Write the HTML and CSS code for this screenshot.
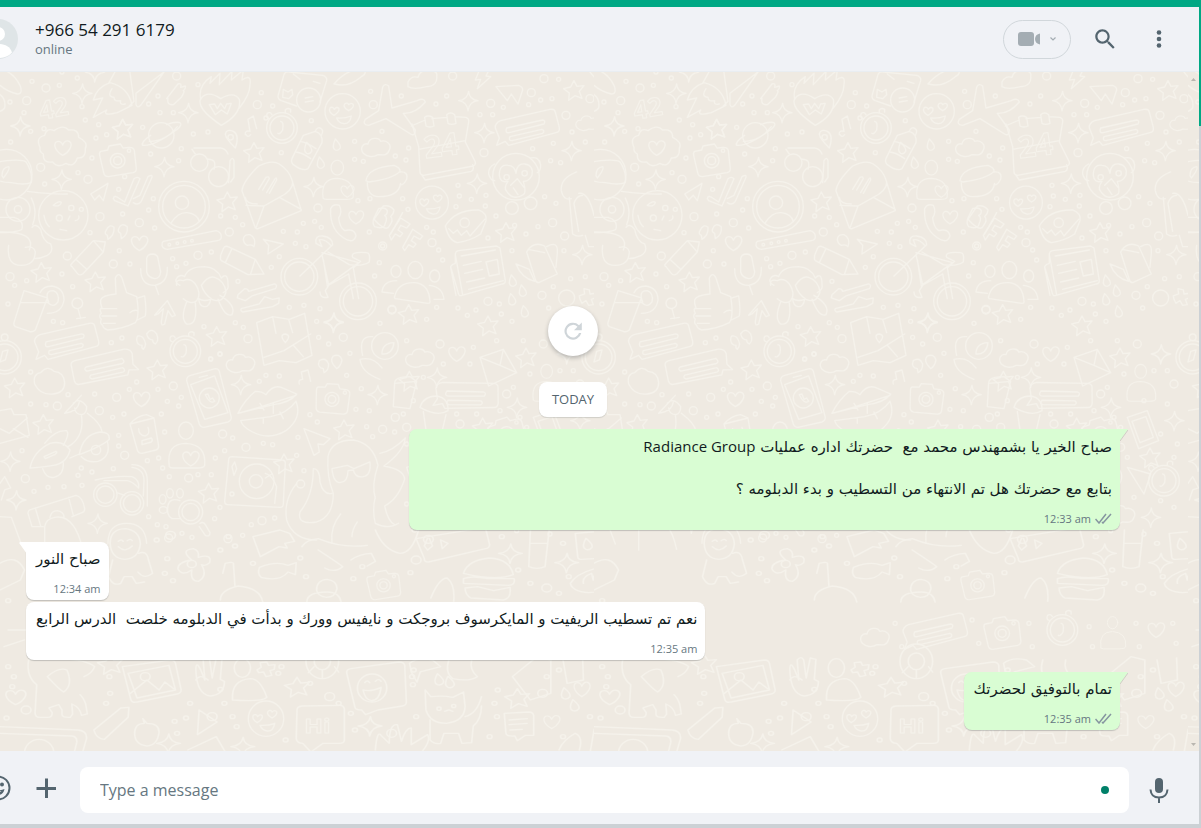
FILE: index.html
```html
<!DOCTYPE html>
<html lang="en">
<head>
  <meta charset="UTF-8">
  <meta name="viewport" content="width=device-width, initial-scale=1.0">
  <title>Chat</title>
  <link rel="stylesheet" href="styles.css">
</head>
<body>
  <div class="app">
    <header class="header">
      <svg class="avatar" viewBox="0 0 40 40" aria-hidden="true">
        <circle cx="20" cy="20" r="20" fill="#dfe5e7"/>
        <circle cx="20" cy="15" r="7" fill="#fff"/>
        <path d="M6 33.500C8 27 14 25 20 25s12 2 14 8.500C30 38 25 39 20 39S10 38 6 33.500z" fill="#fff"/>
      </svg>
      <div class="contact">
        <div class="contact-name">+966 54 291 6179</div>
        <div class="contact-status">online</div>
      </div>
      <div class="actions">
        <button class="video-btn" type="button" aria-label="Video call">
          <svg width="24" height="24" viewBox="0 0 24 24"><rect x="1" y="5" width="16" height="14" rx="3"/><path d="M18 12c0-3 2-5 5-5.500v11c-3-.500-5-2.500-5-5.500z"/></svg>
          <svg width="8" height="8" viewBox="0 0 8 8"><path d="M1.500 2.500L4 5l2.500-2.500" fill="none" stroke="currentColor" stroke-width="1.200"/></svg>
        </button>
        <button class="icon-btn" type="button" aria-label="Search">
          <svg width="26" height="26" viewBox="0 0 24 24"><path d="M15.900 14.300H15l-.3-.3c1-1.100 1.600-2.700 1.600-4.300 0-3.700-3-6.700-6.700-6.700S3 6 3 9.700s3 6.700 6.700 6.700c1.600 0 3.200-.6 4.300-1.600l.3.3v.8l5.100 5.100 1.500-1.500-5-5.200zm-6.200 0c-2.600 0-4.600-2.100-4.600-4.600s2.100-4.600 4.600-4.600 4.600 2.100 4.600 4.600-2 4.600-4.600 4.600z"/></svg>
        </button>
        <button class="icon-btn" type="button" aria-label="Menu">
          <svg width="24" height="24" viewBox="0 0 24 24"><circle cx="12" cy="5.500" r="2.300"/><circle cx="12" cy="12" r="2.300"/><circle cx="12" cy="18.500" r="2.300"/></svg>
        </button>
      </div>
    </header>

    <main class="chat">
      <svg class="wallpaper" aria-hidden="true">
        <defs>
          <marker id="dot" markerUnits="userSpaceOnUse" markerWidth="20" markerHeight="20" refX="10" refY="10"><circle class="line" cx="10" cy="10" r="6"/></marker>
          <marker id="ring" markerUnits="userSpaceOnUse" markerWidth="40" markerHeight="40" refX="20" refY="20"><circle class="line" cx="20" cy="20" r="12"/></marker>
          <marker id="spark" markerUnits="userSpaceOnUse" markerWidth="80" markerHeight="80" refX="40" refY="40"><path class="line" d="M42 12q2 25 28 28q-26 3-30 30q-2-26-28-30q26-3 30-28z"/></marker>
          <marker id="star" markerUnits="userSpaceOnUse" markerWidth="80" markerHeight="80" refX="40" refY="40"><path class="line" d="M38 12l9 17 21-2-14 17 8 21-21-8-19 14 2-22-17-13 21-5z"/></marker>
          <path id="heart" d="M0 22C-30 4-28-20-13-20Q-4-20 0-9Q7-26 20-20C34-10 18 14 0 22z"/>
          <path id="cloud" d="M-38 20c-12-16 0-32 14-28c4-22 34-20 38-8c20-6 34 12 26 26c-6 20-24 14-34 14c-16 10-34 6-44-4z"/>
          <path id="drop" d="M-4-17q18 18 15 27q-6 10-15 6q-12-6 0-33z"/>
          <g id="love"><circle r="53"/><path d="M-26 12q-18-10-12-22q8-6 13 4q8-10 14-2q2 10-15 20zM18-2q-18-10-12-20q8-6 12 2q9-8 14 0q2 10-14 18zM-18 20q24 2 44-6q-4 24-22 23q-16-2-22-17z"/></g>
          <g id="bubble"><path d="M-80-26L68-60q14-2 16 8l12 46q2 14-10 16L-56 48l-10-12-26 12 8-22-12-30q-2-14 16-22z"/><path d="M-62-4L46-28q10 2 4 12L-54 10q-14 2-8-14zM-52 22L44 0q10 4 2 12L-46 34q-12 0-6-12z"/></g>
          <g id="camera"><path d="M-50-28l20-4 4-12 34-6 8 12 20-2q12 0 14 10l6 54q0 10-10 12l-74 12q-12 0-14-12l-12-52q-2-10 4-12z"/><circle r="22"/><circle r="12"/><circle cx="34" cy="-30" r="5"/></g>
          <g id="clock"><circle r="46"/><circle r="36"/><path d="M-4-20q10 0 6 26q-8 14-14 10M10-46v-8q6-8 16-2v8M-38-28q-12-4-6-16q8-6 14 4"/></g>
          <g id="compass"><circle r="50"/><circle r="40"/><path d="M-14 14l8-32 16-4-8 30z"/><circle cy="-60" r="10"/></g>
          <g id="person"><ellipse cy="-60" rx="22" ry="26"/><path d="M-50 48q-10-70 50-70q62 4 56 66q-2 8-24 8h-70q-10 0-12-4z"/></g>
          <pattern id="doodles" patternUnits="userSpaceOnUse" width="594" height="686">
            <g class="line">
              <!-- top left -->
              <g transform="scale(.3333)">
                <path d="M0-10q40 10 60 50q10 26-8 26Q20 58 0 40M-20 60q40 8 34 48q-10 14-34 10"/>
                <text class="doodle-text" x="118" y="136" transform="rotate(-10 160 110)">42</text>
                <path d="M330 32q-40 14-50 52l28-6-28 58 40-22q-14 20 32 8l44-22q-10-54-66-68zM326 34l22-40 40-6 14 100-14 14M336 50q-16 24 6 26 0 14 20 10-4 14 14 10"/>
                <path d="M408 64l84-64-70 100q-10 10-14-2zM500 80l34-44q12-4 8 10l14-4q2 8-6 14 6 0-6 20l-24 22q-20 2-16-18z"/>
                <path d="M664 160q-80-54-60-82q20-24 58 2q40-24 56 2q8 44-54 78zM602 80q-8-40 32-66l-4 20 30-30-2 34 38-40-2 26 36-30-4 30q30-20 24 14 0 30-32 70M628 98l16-2 8 14 10-16 12 16 6-14 14-2-12 32-18-12-18 14z"/>
                <path d="M852 8l-18 64q0 10 10 14l46 16M852 8q4-10 16-8l100 10q14 4 12 16l-20 64M850 52l14 8 12-8 2 16-12 12-18-4zM880 6l20 16M940 28l20 6"/><circle cx="926" cy="84" r="36"/><path d="M916 78l22-4M916 90l24-4M1002 36q40-46 84-44q20 10-2 22q-40 34-80 22z"/>
                <use href="#love" x="1028" y="118"/>
                <path d="M1148 46q6-14 18-4l10 66 76-22q20-10 24 4-30 36-66 34l36 50q0 20-14 12l-74-46-52 20q-20-2-10-18l40-26z"/>
                <path d="M120 226q-14-30 14-36q6-24 28-14q28-20 44-2q30-4 30 22q30 14 20 34q2 30-24 28q-10 30-34 16q-26 16-40-4q-30 4-28-24q-12-6-10-20z"/><use href="#heart" x="188" y="228"/>
                <use href="#camera" x="353" y="266"/>
                <circle cx="484" cy="190" r="38"/><path d="M452 190q-30 20-24 30q34 4 104-48q16-14 8-20q-14-4-40 6M448 208q50 0 84-44"/>
                <circle cx="598" cy="272" r="26"/><circle cx="656" cy="314" r="30"/><path d="M622 262q30-2 20 30M576 232l10 14M582 228h80q16 2 22 18M686 332l4-66q8-14 12 0v50l-10 14"/>
                <path d="M706 228q-30-30-30-42q4-16 24-8q20 10 6 50z"/><circle cx="692" cy="196" r="8"/>
                <path d="M736 188q-2-14 14-10l-6-36 16-10 10 38M752 188q-8 10-14 0"/>
                <use href="#clock" x="846" y="168"/>
                <path d="M876 260l34-70 36-12q24 8 20 34l-42 78q-14 10-44-12 -8-8-4-18zM900 208q20 2 48 22M888 240q20 2 44 20M946 178q6-16 18-8q8 6 0 20"/><use href="#drop" x="924" y="228"/>
                <use href="#drop" x="1010" y="218"/><use href="#drop" x="962" y="272"/><use href="#cloud" x="1128" y="224"/>
                <circle cx="20" cy="308" r="76"/><path d="M-40 300q10-30 60-34q50-4 58 4q20 30 16 62q-20 8-60 0q-50 0-74-32zM6 312q0-26 20-28q6 6-16 34z"/>
                <circle cx="54" cy="412" r="36"/><circle cx="54" cy="412" r="11"/><path d="M82 358q80 10 120 8M96 466q10-14 26 6 6 36 30 44 10 22-10 34-20 10-40 10M94 378q20 40 4 80M-20 436h62q30 8 24 34-4 10-66 12M0 480q110-2 88 54M26 520q-8 60 38 60 40 0 42-40-4-20-30-14"/>
                <circle cx="190" cy="430" r="74"/><path d="M160 400q20-16 24-8-4 14-24 8zM204 444l6-12M226 446q14-4 10-14M132 430q4 24 16 34M180 472l20 4"/><circle cx="178" cy="438" r="9"/><circle cx="214" cy="408" r="8"/><circle cx="244" cy="412" r="6"/>
                <path d="M272 366l52-32-14 52-12-16-14 14z M340 380q2-12 16-2l18 12 28-70q10-8 18 0l-36 82-40-16zM400 380l20-10 24-56q14-8 12 2l-32 72q-10 14-24 4"/>
                <circle cx="552" cy="404" r="76"/><circle cx="552" cy="404" r="64"/><circle cx="546" cy="392" r="20"/><path d="M514 452q20-32 48-30q30 4 36 26"/>
                <path d="M726 356q4-30 50-74 40-20 62-6 30 20 38 48l28 92-130 54q-8 2-10-8zM738 400l54 2 46-26 66 36M792 402l-24 66M736 376q2 20 36 20M838 376q40-20 40-44M776 352l22-36q8-4 10 4l-20 34M800 362l24-40q6-10 6 2l-22 40"/>
                <use href="#person" transform="translate(1012 338) scale(.85)"/><use href="#heart" transform="translate(1042 358) scale(.8)"/>
                <path d="M1098 326q6-40 84-46q20 8 18 18-20 22-94 32zM1102 332q0 40 34 42 60 0 66-40M1200 300q26-2 20 22-10 20-20 16"/>
                <path d="M992 410q8-16 26-10q10 20-2 38 4 30 18 38 30-8 34 16-6 20-26 12-54-26-50-94z"/><use href="#heart" transform="translate(1068 436) scale(.9)"/>
                <path d="M318 476q10-22 24-10q2 24-18 36l-2-12q-10-4-4-14zM356 470q8-20 26-6q2 26-18 36l-2-16q-10-4-6-14z"/><use href="#heart" x="418" y="514"/>
                <path d="M214 576l66-70 36 4-6 30-62 66q-10 6-16-2l-16-20q-6-4-2-8zM280 506l30 34M230 564l30 28"/>
                <path d="M490 508l158-32q16 4 16 18 0 10-12 12l-150 26q-14-2-16-12 0-10 4-12z"/><circle cx="508" cy="518" r="4"/><circle cx="532" cy="514" r="4"/><circle cx="554" cy="510" r="4"/><circle cx="576" cy="506" r="4"/>
                <path d="M662 550l8-20q4-10 14-6l82 38 26 44-48 2-80-42q-4-4-2-16zM766 562l-14 44M696 530l-20 42M730 504q0-18 20-16 20 10 12 36-6-8-20-4-10-4-12-16z M790 502l60 14-46 30 2-26z"/>
                <path d="M440 600v-40q2-14 18-14 16 2 16 14l8 40q-2 20-18 20-20-4-24-20zM422 590q0 50 42 50 40-6 38-54M466 640l10 28"/>
                <path d="M302 684q4-14 46-18l-2-48q10-20 20 0l14 44 30 12q10 60-4 78-40 20-84 22-14-6-14-14-10-6-4-18-10-10 0-18-8-14 2-16-6-14-4-24M306 710h44M306 732h44M310 754h36M414 678l20-6q6 40 2 60l-24 12M414 716q-14-4-24 6"/>
                <path d="M540 640q-20-10-8-24 10-10 22-2 10-30 60-30 36 2 50 34 20-20 20 20 4 14-14 24M530 640q-4-20 20-14 20-10 36 10 20 30 4 50-16 14-40-6M604 640q20-30 40-24 30 10 34 44-10 36-42 22-24-16-32-42M596 680q14 10 36 2-4 24-20 22-14-2-16-24zM560 690q-20 50 0 66 34 6 26-64M660 670q50 30 36 58-20 10-42-46"/>
                <path d="M464 730l38-44 24 44-10 4-12-18-10 40q-10 8-10-6l6-40-16 16zM714 668l20-18q10 0 12 8l78-22q10 4 2 14l-70 22-20 14-24-8zM724 710l54-14 16-22 24 8 20-4-2 16-18 10-90 16q-8-4-4-10z"/>
                <circle cx="898" cy="614" r="55"/><circle cx="898" cy="614" r="44"/><circle cx="1074" cy="688" r="55"/><circle cx="1074" cy="688" r="44"/>
                <path d="M900 612l94-90q-20-24-36-18l8 20-18-10q-4-24 20-22 30 4 30 26l-32 30 20 90 90-66-110-30M984 540l64 38q40 6 60-8 4-28-8-28-50-4-42 14l24 12-22 20 16 92M1060 680l-14-74-64 36-12-80M960 660q0 20 24 16l-8-20 12-18"/>
                <path d="M72 656l70 22-36 96q-10 8-18 4l-42-14q-6-4-4-12zM62 692h80M146 690q-14-34 14-34 20 8 14 34-14 20-32 0M120 662q10-20 36-20 36 6 36 42-6 40-50 40"/><circle cx="232" cy="694" r="16"/><path d="M234 710l8 30M230 740l26-4"/>
                <use href="#bubble" x="200" y="814"/>
                <use href="#compass" x="14" y="856"/><use href="#compass" x="1796" y="856"/>
                <path d="M410 804q0-20 18-8 16 20 2 36-6-4-4-12-14 0-16-16zM440 786q14-22 30 0 8 20-4 30-8-4-8-12-14 0-18-18z"/>
                <use href="#clock" x="556" y="838"/><use href="#cloud" x="722" y="872"/>
                <path d="M770 752l48-18 50 8 46-18 22 126-48 22-50-6-46 14zM818 734l10 50M866 742l12 40M792 856l60-20 80-50M880 820l30 34M856 812q-20-24 0-26 20 4 0 26z"/>
                <circle cx="1155" cy="822" r="40"/><path d="M1146 846q0-32 36-34-4 36-36 34M1088 850q-14-60 30-56M1080 862q40-10 66 26M1080 862q4 40 60 60"/>
                <path d="M1122 438l14-28q20-6 26 6 0 12-8 14 10 6 2 24-4 20-32 10-8-10-2-26zM1172 486l36-64"/>
                <path class="stars" d="M370 170M764 240L684 388L126 600L288 628L652 792L370 170"/>
                <path class="sparks" d="M246 64L60 162L184 322L492 284L564 122L940 344L1000 750L284 0"/>
                <path class="rings" d="M80 86L122 286L264 322L772 98L300 434L418 452L688 480L202 552L340 576L954 408L744 800L1120 98L30 614L594 550L1176 714L1030 796L138 48L530 12"/>
                <path class="dots" d="M96 28L178 40L232 18L72 122L30 90L92 178L132 170L32 210L246 104L256 144L296 158L320 188L288 198L276 258L234 302L134 336L474 72L446 96L480 122L428 166L520 122L580 186L624 180L544 230L452 246L536 266L594 38L784 62L818 102L844 242L934 146L798 138L662 432L706 436L728 458L368 426L446 414L460 380L464 468L358 536L390 576L518 560L530 584L558 574L634 540L838 554L886 514L918 524L892 480L910 454L944 448L964 466L850 478L1074 386L1110 380L1064 208L1064 262L1090 268L1146 178L1112 58L1138 572L1124 612L1108 480L1148 522L80 626L44 640L186 606L218 644L24 696L160 748L188 752L366 798L334 812L612 764L706 752L730 766L632 860L660 846L714 628L868 706L912 700L960 710L950 748L986 816L956 796L1050 844L814 586L374 314L356 352L270 482L186 0"/>
              </g>
              <!-- top right -->
              <g transform="translate(300) scale(.3333)">
                <path d="M324 30q10-20 30-14 6-24 30-18 30-4 26 14 4 30-30 32-40 10-56 0zM536 0l-10 24 16-2-10 28 40-36-14-2 8-16M588 44l68-4q12 4 12 14l-14 42-20-30-12 20z"/>
                <path d="M334 162l42-18M396 140l44-4M466 134l32 2q10 4 8 14l-10 60 30 60q2 8-6 12l-150 28q-10-2-10-10l-4-76-20-68M356 232l140-26M366 310l10 14 138-26q10-6 4-20M374 136q10-8 24 0l4 26q-12 6-24 0zM440 128q12-10 24 0l4 26q-14 6-24 0z"/>
                <text class="doodle-text big" x="372" y="252" transform="rotate(-8 430 226)">24</text>
                <use href="#bubble" x="682" y="172"/><use href="#love" transform="translate(396 392) scale(.93)"/>
                <use href="#cloud" transform="translate(862 152) scale(.8)"/>
                <circle cx="648" cy="314" r="70"/><path d="M584 276q-20 10-18 30 6 20 18 20M692 258q24-6 30 20 0 20-10 24M598 310q0-34 26-30 20 0 24 24 2-30 26-28 28 4 22 34-10 20-26 18 10 34 0 40-30 20-50-10-10-10 4-30-24 6-26-18zM632 340l20-20 20 26M640 348l14 20"/><circle cx="620" cy="316" r="8"/><circle cx="674" cy="304" r="8"/><circle cx="636" cy="408" r="19"/><circle cx="692" cy="394" r="19"/>
                <path d="M830 300q-50 20-46 56 6 30 30 24M808 376l10 110q14 10 30 4M836 364q30-4 46 66h60M856 490l10 34h50"/>
                <path d="M836 478l-14-84q8-24 26-24"/>
                <path d="M222 442l28-40q20-4 32 12 0 10-10 20 10 10-4 28-10 20-46-20zM268 490l34-52 28 18-10 12-18-8-8 14 14 10-8 10-14-8-12 18zM308 526l30-54 30 20-8 10-18-10-8 14 14 10-8 10-14-8-12 18z"/>
                <path d="M436 462q30-50 100-48 26 10 22 32l-16 40q-30 20-70 26-26-6-36-50zM446 470l14 14 12-10 12 16 16-14 10 16 44-50"/><circle cx="494" cy="452" r="14"/>
                <path d="M466 548q0-10 10-12l114-14 10 6 16 98q0 8-8 10l-122 34q-10 4-12-10l-22-76q4-8 14-10zM466 548l22 120M484 552l102-18M490 580l54-12M494 604l54-12M500 630l54-12M506 652l104-26M558 570l34-8 6 44-30 6zM452 586l16 84"/>
                <path d="M680 540q20-34 54-18l38 84-56 26q-8 0-10-10zM740 524q36-20 32 20l-4 42M684 532l50 10M648 576l40 16 16 36q-40-10-56-52z"/>
                <ellipse cx="346" cy="594" rx="22" ry="26"/><path d="M284 674q10-44 60-42 44 4 46 58 0 4-6 4l-98-14q-4-2-2-6z"/><ellipse cx="288" cy="598" rx="15" ry="18"/><path d="M246 660q4-34 44-34M246 660l34 4"/><ellipse cx="404" cy="612" rx="15" ry="18"/><path d="M388 640q40 4 44 42l-30 0"/>
                <use href="#drop" x="638" y="626"/><use href="#drop" x="668" y="656"/><use href="#drop" x="636" y="682"/><use href="#drop" x="674" y="718"/>
                <circle cx="800" cy="678" r="24"/><path d="M838 672l16-6-2-16 16 4 2 12 18-2-2 14-12 4 6 16-14 2-8-14-12 8-6-12z"/>
                <path d="M870 0q50 60 70 66 16-24-30-50"/>
                <path class="stars" d="M824 54L620 480L328 726L566 760L1030 0"/>
                <path class="sparks" d="M504 86L552 182L814 236L530 334L846 548L100 752"/>
                <path class="rings" d="M572 94L694 62L732 20L870 80L798 130L552 242L458 12L912 210L758 452L794 492L726 670L564 688L396 512L248 522L912 614L276 712"/>
                <path class="dots" d="M304 72L440 72L408 96L540 128L578 128L610 106L686 98L722 84L756 80L776 22L980 28L1020 48L962 86L912 92L816 180L856 210L752 266L782 272L698 230L760 214L474 340L478 372L514 382L558 370L556 402L588 432L468 404L564 498L644 460L678 486L714 464L734 374L768 394L636 536L792 536L812 620L856 614L760 644L928 640L380 466L400 480L416 534L428 564L326 228L286 252L318 264L308 380L324 412L636 748L502 730L474 708L528 714L598 696L604 726L380 742L410 706L240 754L908 696L746 708"/>
              </g>
              <!-- middle left -->
              <g transform="translate(0 278) scale(.3333)">
                <use href="#bubble" transform="translate(312 56) scale(-1 1) rotate(26)"/>
                <path d="M104 102q-6-30 18-34 20-24 40-4 30 2 32 34 0 30-34 34-40 4-56-30zM0 182l34-6 8 18 36 0 10 62-88 24M0 236l28 14 54-46M40 236l44 26"/>
                <path d="M194 190l50-54M194 190q40-6 44-34M220 160q20-20 40 10 0 20-14 24-20 0-22-20M244 194q10 60-30 90l-10 6M262 190q40 30 44 54M90 354q10-50 60-74 40-10 60 20-10 40-50 46-40 6-70 8zM134 280q30-40 66-38 10 10-10 44M238 314q10-60 62-68 30 0 28 22-20 20-90 46zM210 324l28-12M128 356q10 30 34 26 30-6 28-44M132 320l36-16q6 4-4 10l-28 12zM244 320q20 20 50 14 40-14 28-60"/><circle cx="288" cy="300" r="14"/>
                <path d="M560 92q0-14 12-16l74-20q10 0 12 8l36 138q0 10-10 14l-72 16q-10 0-14-10zM572 104l72-26 40 110-70 20zM598 82l24-6"/><circle cx="628" cy="144" r="30"/><path d="M616 134q14 30 28 20l-6-10-8 4-6-16z"/>
                <path d="M714 190q20-40 52-66 20 0 32 10 20-30 46-22l46 20q-20 26-70 32zM714 190l70-20q60-20 104-34M722 212l90-12q50-10 76-46 20 50-30 88-50 30-100 4-30-14-36-34zM780 160l12 20M820 160v30M840 186l10 20M790 206v14"/>
                <use href="#camera" transform="translate(996 148) rotate(14) scale(.96)"/>
                <path d="M898 102q-4-14 10-14l-4-22 20-6 8 34M970 56q-20-4-12-24 20-12 28 10 0 20-14 26zM1000 44q-10-14 0-26 20-8 26 12-4 20-16 26z"/>
                <path d="M912 236l78 30-20 18-16-2 4 24-16 10zM390 222q20-24 50-28l22 10 14 84q0 10-8 12l-42 10q-12 0-14-10zM390 222l72-18M416 236q0 20 20 22 16-6 8-26M426 272l28-8q6 6 0 12l-28 8z"/><use href="#heart" x="424" y="148"/>
                <use href="#person" transform="translate(558 302)"/><use href="#heart" x="572" y="326"/>
                <path d="M686 330q0-10 10-10l150 10q10 0 10 10l-6 122q0 10-10 10l-158-8q-8 0-8-10z"/><circle cx="770" cy="394" r="52"/><circle cx="768" cy="394" r="20"/><path d="M796 370q20 4 34 40l-6 50M696 350l8-14 6 20-8 20zM796 384l20-12"/>
                <path d="M1000 430q-20-50-16-110 10-50 76-50 60 10 74 76-20 60-8 100M996 356l46-10 20 10 48-20q4 40-20 44-24 4-30-20l-16 2q0 34-24 36-20 0-24-42zM1140 310q40-8 76-46-4 40-64 84 60 10 62 40-20 60-60 80 10 46 30 56M1126 440q-10 40 0 80 40 20 70 0M1000 430q0 70-50 86-60 10-50-30 40-50 40-130 20 0 20 40 10 40 36 34M890 400q-40 50-30 110 20 60 90 60M996 580q-6-50 26-88M1056 560q0-20 16-44"/>
                <circle cx="316" cy="434" r="35"/><circle cx="316" cy="434" r="26"/><circle cx="396" cy="460" r="35"/><circle cx="396" cy="460" r="26"/><path d="M286 390q60-14 110-10 24 10 20 34-20-20-34-22h-70M350 428l24 8M396 344q46 0 46 50l0 74M396 352q36 4 36 40l-2 46"/>
                <circle cx="572" cy="486" r="36"/><circle cx="572" cy="486" r="26"/><path d="M600 520q10-6 16 4l14 24q0 14-14 8l-18-26M540 452q-30-10-36 14-6 30 12 40h24"/><ellipse cx="488" cy="448" rx="10" ry="14"/><ellipse cx="510" cy="430" rx="10" ry="14"/><ellipse cx="540" cy="430" rx="10" ry="14"/><ellipse cx="490" cy="480" rx="12" ry="10"/>
                <path d="M84 490q0-10 10-12l134-42q20 4 26 40 0 10-8 12l-30 12M84 490l12 40h34M134 600v-70q4-24 30-28 60-10 84 96M150 502q4-20 22-20 20 4 20 20M206 442l14 54M106 474l16 54M0 500l34 2 30 80M0 400l14-20 18 34-18 6-10 30"/>
                <path d="M324 580q0-60 56-60t60 60"/>
                <path d="M1184 100q0-20 46-20l20 14M1184 100l-4 70 50 6 20-82z"/>
                <path class="stars" d="M46 112L474 58L132 222L628 428L854 340L1034 238"/>
                <path class="sparks" d="M30 334L48 450L292 520L722 104L1132 134"/>
                <path class="rings" d="M350 142L172 168L298 182L374 316L76 386L738 292L520 108L668 252L902 402L1148 238L566 384L786 512L506 564L1186 202L684 566"/>
                <path class="dots" d="M92 66L92 162L138 164L204 134L284 132L338 202L372 192L356 256L356 288L244 354L276 366L340 356L234 376L246 406L192 410L144 412L102 424L410 96L388 118L474 118L502 154L536 168L544 142L484 192L494 246L476 324L488 354L442 332L508 380L594 374L634 374L646 324L674 302L698 264L632 28L660 12L778 94L798 76L838 78L930 194L952 216L894 262L790 280L818 284L890 316L912 362L1100 230L1118 260L1184 246L1068 178L1084 116L1108 182L1040 76L446 500L472 524L498 530L546 550L576 562L644 506L660 472L728 556L754 524L824 504L66 302L696 432"/>
              </g>
              <!-- middle right -->
              <g transform="translate(400 262) scale(.3333)">
                <use href="#cloud" x="60" y="70"/><use href="#bubble" transform="translate(200 190) rotate(14)"/><use href="#heart" x="170" y="60"/>
                <path d="M240 70l70-24 40 70-84 40zM240 70l60 24 10-48M300 94l50 22"/><use href="#person" transform="translate(440 160) scale(.8)"/>
                <path d="M60 220q10-34 50-34 36 6 34 44-30 20-84-10zM70 232l10 70 44 0 14-60M400 250l60-20 34 90-60 24zM414 262l42-14 22 62-40 16z"/>
                <use href="#camera" transform="translate(320 300) rotate(-8)"/><use href="#love" transform="translate(180 350) scale(.9)"/><use href="#clock" x="510" y="440"/>
                <path d="M20 400l90-30 30 90-90 34zM40 416l60-20M46 440l60-20M270 430q30-60 90-40 40 30 10 70-40 40-90 20zM290 440q20-30 50-24M400 400l50 80 20-60z"/>
                <use href="#bubble" transform="translate(220 520) rotate(-4)"/><use href="#cloud" x="380" y="540"/><use href="#heart" x="60" y="540"/>
                <path class="stars" d="M30 140L380 70L250 280L470 370L60 340"/>
                <path class="sparks" d="M110 130L350 220L500 60L540 260L220 440L470 550"/>
                <path class="rings" d="M120 30L320 180L540 150L20 280L380 340L180 270L430 30L150 490L330 380"/>
                <path class="dots" d="M20 20L70 130L130 90L210 90L220 40L290 20L370 20L340 160L390 120L480 110L520 110L300 230L230 240L170 240L40 200L10 240L380 280L360 250L450 200L520 210L550 330L500 300L540 370L240 340L110 330L20 330L140 410L240 390L260 380L400 370L420 490L500 500L370 490L150 450L20 510L90 510L120 560L310 560L350 590L540 520L450 600"/>
              </g>
              <!-- bottom -->
              <g transform="translate(0 458) scale(.408 .3333)">
                <path d="M270 40q0-42 36-44 36 4 38 46-4 44-38 46-34-2-36-48zM276 90l-10 50q10 30 30 20l8-20h20l10 20 20-4M340 70q20-10 24 20l10 40q-20 20-36-4M290 34q8-8 12 0M312 32q8-8 12 0M290 50q16 20 34-2"/>
                <path d="M620 20l66-20 24 10 12 24-24 6 6 14-20-4-46 30zM470 90q-30-30 4-34 16 6 12 26 34-12 28 16-10 12-20 6 16 34-8 50-20 0-16-34-24 20-34-4 0-20 34-26z"/><circle cx="470" cy="102" r="11"/>
                <path d="M1020 26l150-30q10-6 20-2l10 50q0 10-10 12l-140 40q-10 0-10-10zM1040 48l10-30 10 30-12 12zM1080 30l18 10-14 16z M920 0q20 60 60 70 30 0 46-70M740 50q10-20 40-24 60 30 120 20M780 60q50 40 60 50-20 20-44 4M860 90q24-20 50-20l10 24-20 14"/>
                <path d="M636 112q40-20 70-6l20-8-2 36-18-8q-20 30-66 16-10-10-4-30zM546 130l6-30q20-6 20 0l4 70M540 210q0-30 44-42 54 6 60 48M776 180q0-30 26-32 24 4 24 28-4 26-26 26-22-4-24-22M752 216q0-30 50-30 30 0 34 30"/>
                <use href="#camera" transform="translate(940 166) scale(.75 .9)"/>
                <path d="M1136 130q10-40 64-46 50 4 58 50-40 20-122-4zM1136 146q20-10 60 0l64 0q4 20-14 20l-110-6zM1140 174l30-4 40 12 40-10q4 34-16 38l-80-6q-14-10-14-30zM1056 204q20-60 40-60 20 20 16 70M1300 0l-4 110q20 10 40 0l10-110M1300 40h40M1412 10l90-10M1410 10l6 70q0 8 10 8l80-6 10-80M1398 160q20-40 100-54 40 4 44 26-30 50-100 56-40-4-44-28zM1430 160q-4-20 20-30l4 20q0-20 20-30l4 20q10-20 20-26"/>
                <use href="#drop" x="1440" y="42"/>
                <path d="M70 390q-6 50 20 74l-4 84q0 14 12 14h20q10 0 10-14l-8-14 24-10 8 16 0 14q2 10 20 8l6-10-2-30q20 10 24 34l14-4-4-30q-6-20-14-28M116 440q30 40 40 46 24-20 8-66-20-10-48 20zM206 440q20-10 26-30-20-20-80-24M70 390q30-30 90-16"/>
                <path d="M300 410l118-20q10 0 12 10l14 80q0 10-10 12l-98 24q-14 4-16-10zM314 430l100-24 16 74-94 24zM320 490l40-40 30 30 14-24 22 20"/><circle cx="356" cy="440" r="12"/>
                <path d="M480 420q0-30 12 0l10 30-4-60q10-14 16 0l6 54 10-60 14 4-4 60 10 6q0 40-34 44-34-4-36-78zM480 450q10-20 30 0"/>
                <ellipse cx="594" cy="414" rx="20" ry="28"/><path d="M570 510q-4-60 44-64 24 0 40 56-10 14-84 8zM630 420l10-8-2-14 16-2 4 10 16-2-2 14-10 4 4 14-14 4-6-14-12 2z"/>
                <ellipse cx="790" cy="394" rx="40" ry="52"/><ellipse cx="790" cy="394" rx="20" ry="25"/><path d="M790 420v24M770 410l-14 18M820 410l10 16"/>
                <path d="M850 430q-2-12 10-14l118-20q12 0 14 10l4 110q0 10-10 12l-60 12-30 14-10-14q-14 0-16-8z"/><ellipse cx="912" cy="474" rx="36" ry="42"/><path d="M890 480q20 6 44-8-4 40-24 40-16-4-20-32zM894 458q6-10 12 0M920 454q8-10 14 0"/>
                <path d="M1004 400q20-20 56-10l20 20-50 16-8 30-14-30zM1100 390q-10 40 10 56 40 10 60-6-20-20-14-50M1256 440l60-60 34 10v100l-50 20zM1380 390l10 70 40-10-2-66"/>
                <path d="M1056 500l-14-20 2 60q10 40 50 40 44-6 46-50l-4-44-26 16q-24-6-54-2zM1054 570v60q10 14 26 10l8-30h36l8 30 24-2 4-50q20-20 20-60M1140 560q30-10 40-60M1090 544l10-4 10 4"/><circle cx="1076" cy="536" r="5"/><circle cx="1112" cy="528" r="5"/>
                <use href="#love" transform="translate(652 566) scale(.82 1)"/>
                <path d="M728 540q0-10 12-12l94-2q8 0 10 10v94q0 10-12 10h-40l-30 26-20-26q-14 0-16-14z"/><text class="doodle-text hi" x="746" y="608">Hi</text>
                <path d="M230 600l66-66 20-2-2 30-58 66q-20 0-26-28zM330 610q0-30 24-30l-4-14 10 14q30 0 30 26-4 40-30 42-30-4-30-38zM488 540l44 36-48 38zM920 660q4-60 14-44l20 24q0-60 20-56l10 50q10-40 24-40l0 50 40-30q10 20-20 60M460 660l70-40 24 50"/>
                <path d="M1236 550l60-4q10 0 12 10l0 60-20 0-20 16-6-14q-20 2-22-8zM1248 570l44-4M1248 584l44-4M1250 600l30-2M0 590l190 10q24 2 22 26l-14 60M0 610l176 8q14 2 12 20l-8 40M1370 660q10-30 40-50 20 10 10 50M1446 670l10-70q4-14 20-14l90 10"/><ellipse cx="96" cy="670" rx="36" ry="42"/>
                <use href="#heart" x="38" y="502"/><use href="#heart" transform="translate(1426 478) scale(.8 1)"/><use href="#heart" transform="translate(1352 576) scale(.8 .9)"/>
                <use href="#drop" x="1076" y="448"/><use href="#drop" x="1102" y="456"/><use href="#drop" x="1386" y="490"/><use href="#drop" x="1408" y="526"/>
                <path d="M0 100q40-30 60 20l-10 30-50 30M20 300l44 0M10 350l50-20"/>
                <g transform="translate(0 260) scale(.82 1)">
                  <use href="#cloud" x="840" y="60"/><use href="#bubble" x="1020" y="50"/><use href="#camera" x="1220" y="50"/><use href="#clock" x="1400" y="40"/><use href="#person" transform="translate(1550 60) scale(.7)"/><use href="#heart" x="1680" y="40"/>
                  <path class="dots" d="M900 20L920 90L1130 10L1150 80L1300 20L1310 90L1480 30L1490 90L1620 20L1630 90L1730 20L1740 80"/>
                </g>
                <path class="stars" d="M272 402L730 470L1270 504"/>
                <path class="sparks" d="M1250 70L1388 98L906 588L412 640L594 650"/>
                <path class="rings" d="M1050 28L1020 90L64 540L808 500L520 560L1330 490L418 16L1340 174L960 610"/>
                <path class="dots" d="M384 30L410 86L404 130L424 152L560 20L576 48L540 60L620 100L736 84L750 140L866 146L888 110L1006 128L1016 0L1230 20L1270 120L1380 40L1370 190L1394 140L1300 160L20 410L34 440L30 470L16 564L20 212L268 440L270 490L260 520L466 520L428 574L456 564L540 478L550 520L570 560L580 590L690 410L682 430L760 460L830 520L1012 464L1014 420L1010 440L1220 480L1212 520L1218 560L1340 440L1370 420L1446 560L1380 620L860 550L870 600L1020 560L1200 620L434 610L700 630"/>
              </g>
            </g>
          </pattern>
        </defs>
        <rect width="100%" height="100%" fill="url(#doodles)"/>
      </svg>

      <button class="refresh" type="button" aria-label="Load older messages">
        <svg width="24" height="24" viewBox="0 0 24 24"><path d="M18 6.200A8.500 8.500 0 1 0 20.300 14H18a6.300 6.300 0 1 1-1.500-6.200L13 11.200h7.800V3.400z"/></svg>
      </button>
      <div class="day">TODAY</div>

      <div class="message out wide first">
        <svg class="tail" width="8" height="13" viewBox="0 0 8 13"><path d="M0 0h8L0 12z"/><path class="tail-edge" d="M8 1L0 12"/></svg>
        <p class="text" dir="rtl">صباح الخير يا بشمهندس محمد مع  حضرتك اداره عمليات <span class="latin">Radiance Group</span>

بتابع مع حضرتك هل تم الانتهاء من التسطيب و بدء الدبلومه ؟</p>
        <div class="meta"><span>12:33 am</span><svg class="ticks" width="17" height="11" viewBox="0 0 17 11"><path d="M.5 6l3.500 4L11 1M7 9l1 1 8-9"/></svg></div>
      </div>
      <div class="message in first">
        <svg class="tail" width="8" height="13" viewBox="0 0 8 13"><path d="M8 0H1Q0 0 .5 1.500L8 12z"/></svg>
        <p class="text" dir="rtl">صباح النور</p>
        <div class="meta"><span>12:34 am</span></div>
      </div>
      <div class="message in">
        <p class="text" dir="rtl">نعم تم تسطيب الريفيت و المايكرسوف بروجكت و نايفيس وورك و بدأت في الدبلومه خلصت  الدرس الرابع</p>
        <div class="meta"><span>12:35 am</span></div>
      </div>
      <div class="message out first">
        <svg class="tail" width="8" height="13" viewBox="0 0 8 13"><path d="M0 0h8L0 12z"/><path class="tail-edge" d="M8 1L0 12"/></svg>
        <p class="text" dir="rtl">تمام بالتوفيق لحضرتك</p>
        <div class="meta"><span>12:35 am</span><svg class="ticks" width="17" height="11" viewBox="0 0 17 11"><path d="M.5 6l3.500 4L11 1M7 9l1 1 8-9"/></svg></div>
      </div>

      <div class="scrollbar" aria-hidden="true">
        <svg width="5" height="3" viewBox="0 0 5 3"><path d="M0 3L2.500 0 5 3z"/></svg>
        <svg width="5" height="3" viewBox="0 0 5 3"><path d="M0 0l2.500 3L5 0z"/></svg>
      </div>
    </main>

    <footer class="composer">
      <div class="tools">
        <button class="tool-btn" type="button" aria-label="Emoji">
          <svg width="26" height="26" viewBox="0 0 26 26"><circle cx="13" cy="13" r="11.500" fill="none" stroke="currentColor" stroke-width="2"/><circle cx="9" cy="9.500" r="2"/><circle cx="17" cy="9.500" r="2"/><path d="M6.500 14q6.500 2.500 13 0-1 6-6.500 6t-6.500-6zm3 2q3.500 2 7 0" fill-rule="evenodd"/></svg>
        </button>
        <button class="tool-btn" type="button" aria-label="Attach">
          <svg width="26" height="26" viewBox="0 0 26 26"><path d="M12 3.500h3V12h8v3h-8v8h-3v-8H3.500v-3H12z"/></svg>
        </button>
      </div>
      <label class="field">
        <input type="text" placeholder="Type a message" aria-label="Type a message">
        <span class="dot"></span>
      </label>
      <button class="tool-btn" type="button" aria-label="Voice message">
        <svg width="26" height="26" viewBox="0 0 26 26"><rect x="9" y="1" width="8" height="15" rx="4"/><path d="M4.500 12.500q.5 8 8.500 8t8.500-8M13 20v6" fill="none" stroke="currentColor" stroke-width="2"/></svg>
      </button>
    </footer>
  </div>
</body>
</html>
```
FILE: styles.css
```css
* {
  box-sizing: border-box;
}
body {
  margin: 0;
  font-family: "Open Sans", "Noto Sans", "DejaVu Sans", sans-serif;
  color: #111b21;
  background: linear-gradient(#00a884 126px, #ccd1d5 126px);
}
.app {
  display: flex;
  flex-direction: column;
  height: 100vh;
  padding: 7px 2px 4px 0;
  overflow: hidden;
}
button {
  display: flex;
  align-items: center;
  justify-content: center;
  flex-shrink: 0;
  padding: 0;
  border: none;
  background: none;
  color: #54656f;
  cursor: pointer;
}
svg {
  display: block;
  fill: currentColor;
}

/* header */
.header {
  display: flex;
  align-items: center;
  padding: 12px 20px 12px 0;
  background: #f0f2f6;
  border-bottom: 1px solid #e9edf1;
}
.avatar {
  width: 40px;
  height: 40px;
  margin-left: -22px;
  flex-shrink: 0;
}
.contact {
  flex: 1;
  margin-left: 17px;
}
.contact-name {
  font-size: 17px;
  line-height: 21px;
}
.contact-status {
  font-size: 13px;
  line-height: 19px;
  color: #667781;
}
.actions {
  display: flex;
  align-items: center;
  gap: 14px;
}
.icon-btn {
  width: 40px;
  height: 40px;
}
.video-btn {
  width: 68px;
  height: 39px;
  gap: 8px;
  border: 1px solid #d1d7db;
  border-radius: 20px;
  color: #a4adb3;
}

/* chat */
.chat {
  position: relative;
  flex: 1;
  display: flex;
  flex-direction: column;
  justify-content: flex-end;
  align-items: flex-start;
  min-height: 0;
  padding: 0 79px 21px 26px;
  background: #efeae2;
}
.wallpaper {
  position: absolute;
  inset: 0;
  width: 100%;
  height: 100%;
}
.line {
  fill: none;
  stroke: #f5f2eb;
  stroke-width: 4;
  stroke-linejoin: round;
  stroke-linecap: round;
}
.dots, .rings, .stars, .sparks {
  stroke: none;
}
.dots {
  marker: url(#dot);
}
.rings {
  marker: url(#ring);
}
.stars {
  marker: url(#star);
}
.sparks {
  marker: url(#spark);
}
.doodle-text {
  font: bold 76px "Open Sans", sans-serif;
  stroke-width: 3;
}
.big {
  font-size: 92px;
}
.hi {
  font-size: 60px;
}
.refresh {
  position: relative;
  align-self: center;
  width: 50px;
  height: 50px;
  margin-bottom: 26px;
  border-radius: 50%;
  background: #fff;
  color: #cfd5d9;
  box-shadow: 0 2px 4px rgba(11, 20, 26, 0.25);
}
.day {
  position: relative;
  align-self: center;
  padding: 7px 13px;
  border-radius: 8px;
  background: #fff;
  color: #54656f;
  font-size: 13px;
  line-height: 21px;
  box-shadow: 0 1px 1px rgba(11, 20, 26, 0.13);
}
.message {
  position: relative;
  max-width: 65%;
  margin-top: 2px;
  padding: 7px 8px 4px 10px;
  border-radius: 8px;
  background: #fff;
  color: #fff;
  box-shadow: 0 1px 1px rgba(11, 20, 26, 0.2);
}
.first {
  margin-top: 12px;
}
.out {
  align-self: flex-end;
  background: #d9fdd3;
  color: #d9fdd3;
}
.wide {
  width: 65%;
}
.tail {
  position: absolute;
  top: 0;
}
.in .tail {
  left: -7px;
}
.out .tail {
  right: -8px;
}
.tail-edge {
  fill: none;
  stroke: #cfcdc5;
}
.in.first {
  border-top-left-radius: 0;
}
.out.first {
  border-top-right-radius: 0;
}
.text {
  margin: 0 0 11px;
  font-family: "DejaVu Sans", sans-serif;
  font-size: 15px;
  line-height: 21px;
  color: #111b21;
  white-space: pre-wrap;
}
.latin {
  font-family: "Open Sans", sans-serif;
}
.meta {
  display: flex;
  justify-content: flex-end;
  align-items: center;
  gap: 4px;
  font-size: 11px;
  line-height: 15px;
  color: #667781;
}
.ticks {
  fill: none;
  stroke: #8696a0;
  stroke-width: 1.5;
}
.scrollbar {
  position: absolute;
  inset: 6px 3px 5px auto;
  display: flex;
  flex-direction: column;
  justify-content: space-between;
  color: #b9b6b0;
}

/* composer */
.composer {
  display: flex;
  align-items: center;
  gap: 17px;
  padding: 16px 27px 11px 0;
  background: #f0f2f6;
}
.tools {
  display: flex;
  gap: 22px;
  margin: 0 4px 4px -15px;
}
.tool-btn {
  width: 26px;
  height: 26px;
}
.field {
  flex: 1;
  display: flex;
  align-items: center;
  padding: 0 20px;
  border-radius: 8px;
  background: #fff;
}
.field input {
  flex: 1;
  min-width: 0;
  height: 46px;
  padding: 0;
  border: none;
  outline: none;
  background: none;
  font: 16px "Open Sans", sans-serif;
  color: #111b21;
}
.field input::placeholder {
  color: #667781;
  opacity: 1;
}
.dot {
  width: 8px;
  height: 8px;
  border-radius: 50%;
  background: #008069;
}
```
